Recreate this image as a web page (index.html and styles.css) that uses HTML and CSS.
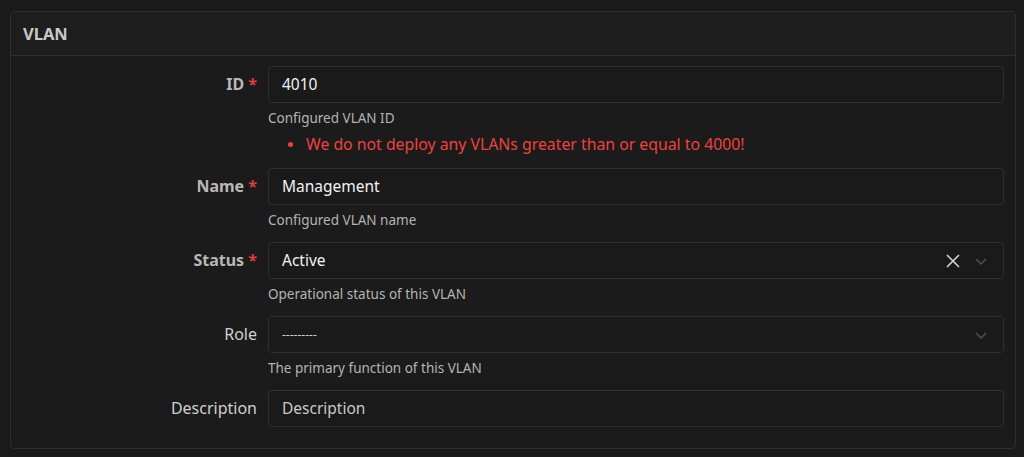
FILE: index.html
```html
<!DOCTYPE html>
<html lang="en">
  <head>
    <meta charset="UTF-8" />
    <meta name="viewport" content="width=device-width, initial-scale=1.0" />
    <title>VLAN</title>
    <link rel="stylesheet" href="styles.css">
  </head>

  <body>
    <div class="card">
      <div class="card_header">VLAN</div>
      <div class="card_body">
        <div class="row">
          <label class="label">ID <span class="req">*</span></label>
          <div class="field">
            <div class="input">4010</div>
            <div class="help">Configured VLAN ID</div>
            <ul class="errors">
              <li>We do not deploy any VLANs greater than or equal to 4000!</li>
            </ul>
          </div>
        </div>

        <div class="row">
          <label class="label">Name <span class="req">*</span></label>
          <div class="field">
            <div class="input">Management</div>
            <div class="help">Configured VLAN name</div>
          </div>
        </div>

        <div class="row">
          <label class="label">Status <span class="req">*</span></label>
          <div class="field">
            <div class="input select">
              <span class="value">Active</span>
              <svg class="clear" width="16" height="16" viewBox="0 0 16 16">
                <path d="M2 2 L14 14 M14 2 L2 14" stroke="#d4d4d4" stroke-width="1.6" fill="none" />
              </svg>
              <svg class="caret" width="14" height="14" viewBox="0 0 14 14">
                <path d="M2 5 L7 10 L12 5" stroke="#4a5258" stroke-width="1.5" fill="none" />
              </svg>
            </div>
            <div class="help">Operational status of this VLAN</div>
          </div>
        </div>

        <div class="row">
          <label class="label plain">Role</label>
          <div class="field">
            <div class="input select">
              <span class="value dash">---------</span>
              <svg class="caret" width="14" height="14" viewBox="0 0 14 14">
                <path d="M2 5 L7 10 L12 5" stroke="#4a5258" stroke-width="1.5" fill="none" />
              </svg>
            </div>
            <div class="help">The primary function of this VLAN</div>
          </div>
        </div>

        <div class="row">
          <label class="label plain">Description</label>
          <div class="field">
            <div class="input placeholder">Description</div>
          </div>
        </div>
      </div>
    </div>
  </body>
</html>
```

FILE: styles.css
```css
* {
  margin: 0;
  padding: 0;
  box-sizing: border-box;
}

body {
  background-color: #1a1a1a;
  font-family: "Noto Sans", "Open Sans", sans-serif;
  color: #e6e6e6;
  padding: 11px 8px 9px 10px;
}

li {
  list-style-type: none;
}

.card {
  border: 1px solid #2f2f2f;
  border-radius: 4px;
  background-color: #1b1b1b;
}

.card_header {
  height: 44px;
  padding: 0 12px;
  line-height: 43px;
  font-size: 16.5px;
  font-weight: bold;
  color: #c8c8c8;
  background-color: #1e1e1e;
  border-bottom: 1px solid #2f2f2f;
}

.card_body {
  padding: 10px 11px 21px 0;
  display: flex;
  flex-direction: column;
  gap: 12px;
}

.row {
  display: grid;
  grid-template-columns: 246px 1fr;
  column-gap: 11px;
  align-items: start;
}

.label {
  height: 37px;
  line-height: 36px;
  text-align: right;
  font-size: 16px;
  font-weight: bold;
  color: #b8b8b8;
}

.label.plain {
  font-weight: normal;
  color: #d0d0d0;
}

.req {
  color: #e03a3a;
}

.input {
  height: 37px;
  border: 1px solid #2f2f2f;
  border-radius: 4px;
  background-color: #1a1a1a;
  padding: 0 15px 0 13px;
  line-height: 35px;
  font-size: 15.5px;
  color: #f2f2f2;
}

.input.placeholder {
  color: #c8c8c8;
}

.select {
  display: flex;
  align-items: center;
  gap: 13px;
}

.select .value {
  flex: 1;
}

.select .dash {
  font-size: 12px;
  color: #d0d0d0;
}

.help {
  margin-top: 5px;
  line-height: 20px;
  font-size: 13.5px;
  color: #b4b4b4;
}

.errors {
  margin-top: 6px;
  margin-bottom: 2px;
  padding-left: 20px;
}

.errors li {
  position: relative;
  padding-left: 18px;
  line-height: 20px;
  font-size: 15.8px;
  color: #f0413f;
}

.errors li::before {
  content: "";
  position: absolute;
  left: 0;
  top: 8px;
  width: 5px;
  height: 5px;
  border-radius: 50%;
  background-color: #f0413f;
}
```
